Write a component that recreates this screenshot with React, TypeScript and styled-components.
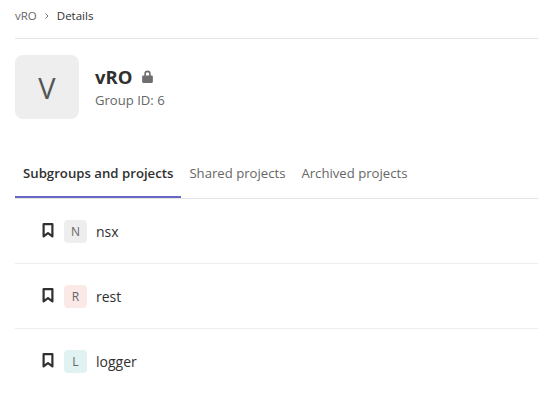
import React from "react";
import styled, { createGlobalStyle } from "styled-components";

const Global = createGlobalStyle`
  html, body { margin: 0; padding: 0; background: #fff; }
  body { font-family: "Open Sans", "Noto Sans", sans-serif; color: #303030; overflow: hidden; }
`;

const Page = styled.div`
  padding-left: 15px;
  width: 523px;
`;

const Breadcrumb = styled.nav`
  display: flex;
  align-items: center;
  gap: 6px;
  font-size: 11.5px;
  padding-bottom: 7px;
  height: 31px;
  border-bottom: 1px solid #e5e5e5;
`;

const Crumb = styled.span<{ $current?: boolean }>`
  color: ${(p) => (p.$current ? "#303030" : "#666666")};
`;

const Header = styled.header`
  display: flex;
  gap: 16px;
  margin-top: 16px;
  align-items: center;
`;

const Avatar = styled.div`
  width: 64px;
  height: 64px;
  border-radius: 8px;
  background: #eeeeee;
  display: flex;
  align-items: center;
  justify-content: center;
  font-size: 29px;
  color: #555;
`;

const Titles = styled.div`
  display: flex;
  flex-direction: column;
`;

const TitleRow = styled.div`
  display: flex;
  align-items: center;
  gap: 9px;
  font-size: 18.5px;
  font-weight: 700;
  line-height: 24px;
  color: #303030;
`;

const Meta = styled.div`
  font-size: 13.1px;
  line-height: 20px;
  margin-top: 1px;
  color: #666;
`;

const Tabs = styled.div`
  display: flex;
  margin-top: 34px;
  height: 45px;
  border-bottom: 1px solid #e5e5e5;
`;

const Tab = styled.div<{ $active?: boolean }>`
  padding: 11px 8px 0;
  line-height: 18px;
  box-sizing: border-box;
  height: 45px;
  margin-bottom: -1px;
  white-space: nowrap;
  color: ${(p) => (p.$active ? "#303030" : "#666")};
  font-weight: ${(p) => (p.$active ? 600 : 400)};
  font-size: ${(p) => (p.$active ? "13.2px" : "13.15px")};
  border-bottom: 2px solid ${(p) => (p.$active ? "#6666c4" : "transparent")};
`;

const Row = styled.div<{ $last?: boolean }>`
  height: 64px;
  display: flex;
  align-items: center;
  padding-left: 27px;
  border-bottom: ${(p) => (p.$last ? "none" : "1px solid #eeeeee")};
`;

const Mark = styled.svg`
  width: 12px;
  height: 15px;
  margin-top: -1px;
  margin-right: 10px;
  color: #303030;
`;

const Badge = styled.div<{ $bg: string }>`
  width: 23px;
  height: 23px;
  border-radius: 4px;
  background: ${(p) => p.$bg};
  display: flex;
  align-items: center;
  justify-content: center;
  font-size: 12px;
  color: #666;
  margin-right: 9px;
`;

const Name = styled.span`
  font-size: 14px;
  font-weight: 500;
  color: #303030;
  margin-top: 1px;
`;

const projects = [
  { name: "nsx", letter: "N", bg: "#eeeeee" },
  { name: "rest", letter: "R", bg: "#fbe9e7" },
  { name: "logger", letter: "L", bg: "#e0f2f1" },
];

export default function App() {
  return (
    <Page>
      <Global />
      <Breadcrumb>
        <Crumb>vRO</Crumb>
        <svg width="8" height="8" viewBox="0 0 8 8" fill="none" stroke="#777" strokeWidth="1">
          <path d="M2.5 1.5 5 4 2.5 6.5" />
        </svg>
        <Crumb $current>Details</Crumb>
      </Breadcrumb>
      <Header>
        <Avatar>V</Avatar>
        <Titles>
          <TitleRow>
            vRO
            <svg width="13" height="15" viewBox="0 0 12 14">
              <path
                fill="#6e6e6e"
                d="M3 6V4.5a3 3 0 0 1 6 0V6h1a1 1 0 0 1 1 1v5a1 1 0 0 1-1 1H2a1 1 0 0 1-1-1V7a1 1 0 0 1 1-1h1zm1.5 0h3V4.5a1.5 1.5 0 0 0-3 0V6z"
              />
            </svg>
          </TitleRow>
          <Meta>Group ID: 6</Meta>
        </Titles>
      </Header>
      <Tabs>
        <Tab $active>Subgroups and projects</Tab>
        <Tab>Shared projects</Tab>
        <Tab>Archived projects</Tab>
      </Tabs>
      {projects.map((p, i) => (
        <Row key={p.name} $last={i === projects.length - 1}>
          <Mark viewBox="0 0 12 15" fill="none" stroke="currentColor" strokeWidth="2.2">
            <path d="M1.6 1.2h8.8v12.2L6 10.2l-4.4 3.2z" strokeLinejoin="round" />
          </Mark>
          <Badge $bg={p.bg}>{p.letter}</Badge>
          <Name>{p.name}</Name>
        </Row>
      ))}
    </Page>
  );
}
